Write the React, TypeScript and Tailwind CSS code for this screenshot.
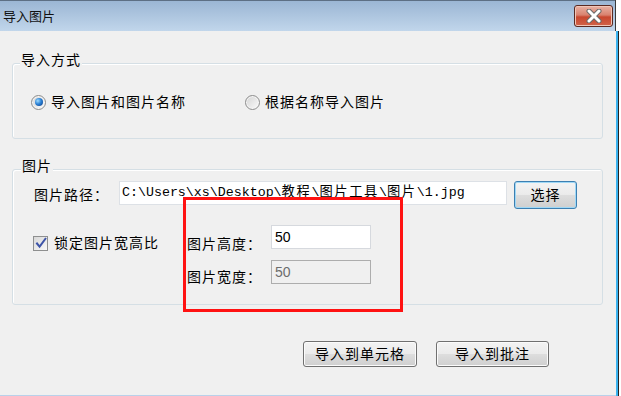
import React from 'react';

const Radio: React.FC<{ checked?: boolean }> = ({ checked }) => (
  <span className="flex h-[15px] w-[15px] shrink-0 items-center justify-center rounded-full border border-[#8d8d8d] bg-gradient-to-br from-[#d4d4d4] to-[#fbfbfb] shadow-[inset_0_0_0_1px_#f6f6f6]">
    {checked && (
      <span className="h-[8px] w-[8px] rounded-full bg-[radial-gradient(circle_at_35%_35%,#9fdcff_0%,#2c82d6_45%,#0a3780_100%)]" />
    )}
  </span>
);

const CheckBox: React.FC = () => (
  <span className="flex h-[15px] w-[15px] shrink-0 items-center justify-center border border-[#8e8f8f] bg-gradient-to-br from-[#d8d8d8] to-[#f9f9f9]">
    <svg width="12" height="12" viewBox="0 0 12 12">
      <path d="M2 6.5 L4.6 9.6 L10.4 1.8" stroke="#3d54a8" strokeWidth="2" fill="none" strokeLinecap="square" />
    </svg>
  </span>
);

const winBtn =
  'flex items-center justify-center rounded-[3px] border bg-[linear-gradient(#f3f3f3_0%,#ebebeb_48%,#dddddd_52%,#cfcfcf_100%)] text-[14px] tracking-[1px] leading-[18px]';

export default function App() {
  return (
    <div className="relative h-[396px] w-[621px] overflow-hidden bg-white font-['Liberation_Sans','Noto_Sans_CJK_SC',sans-serif] text-black">
      {/* title bar */}
      <div className="flex h-[31px]">
        <div className="flex w-[615px] border-t border-[#5d6f84] bg-gradient-to-b from-[#9bb6d4] to-[#c1d6eb]">
          <div className="pl-[3px] pt-[8px] text-[13px] leading-[16px] text-[#111]">导入图片</div>
          <div className="ml-auto mr-[2px] mt-[4px] flex h-[22px] w-[39px] items-center justify-center rounded-[3px] border border-[#5b2a22] bg-[linear-gradient(#e8b2a4_0%,#d9826f_45%,#c8472f_55%,#d1644a_100%)] shadow-[inset_0_0_0_1px_#f1c6b8]">
            <svg width="16" height="14" viewBox="0 0 16 14">
              <path d="M3 2 L13 12 M13 2 L3 12" stroke="#6a6a6a" strokeWidth="5" strokeLinecap="round" />
              <path d="M3 2 L13 12 M13 2 L3 12" stroke="#ffffff" strokeWidth="3" strokeLinecap="round" />
            </svg>
          </div>
        </div>
        <div className="w-px bg-[#3a3a3a]" />
        <div className="flex-1 bg-white" />
      </div>

      {/* body */}
      <div className="flex h-[364px]">
        <div className="w-[616px] bg-[#f0f0f0] pt-[32px] text-[14px] tracking-[1px]">
          {/* 导入方式 */}
          <div className="ml-[12px] h-[76px] w-[591px] rounded-[3px] border border-[#d5dfe5] shadow-[inset_1px_1px_0_#ffffff]">
            <div className="-mt-[13px] ml-[7px] w-fit bg-[#f0f0f0] px-px leading-[18px]">导入方式</div>
            <div className="ml-[18px] mt-[24px] flex h-[18px] items-center">
              <div className="flex w-[214px] items-center gap-[5px]">
                <Radio checked />
                <span className="leading-[18px]">导入图片和图片名称</span>
              </div>
              <div className="flex items-center gap-[5px]">
                <Radio />
                <span className="leading-[18px]">根据名称导入图片</span>
              </div>
            </div>
          </div>

          {/* 图片 */}
          <div className="ml-[12px] mt-[30px] h-[136px] w-[591px] rounded-[3px] border border-[#d5dfe5] shadow-[inset_1px_1px_0_#ffffff]">
            <div className="-mt-[13px] ml-[8px] w-fit bg-[#f0f0f0] px-px leading-[18px]">图片</div>

            <div className="mt-[6px] flex h-[24px] items-start">
              <div className="ml-[21px] w-[85px] pt-[5px] leading-[18px]">图片路径：</div>
              <div className="flex h-[24px] w-[388px] items-center border border-[#dde1e6] bg-white pl-[2px] font-['Liberation_Mono','Noto_Sans_CJK_SC',monospace] text-[13.3px] leading-[20px] tracking-normal">
                C:\Users\xs\Desktop\<span className="tracking-[1.6px]">教程</span>\<span className="tracking-[1.6px]">图片工具</span>\<span className="tracking-[1.6px]">图片</span>\1.jpg
              </div>
              <button className={`${winBtn} ml-[7px] h-[28px] w-[63px] border-[#3c7fb1] shadow-[inset_0_0_0_1px_#9fd8f6]`}>
                选择
              </button>
            </div>

            <div className="mt-[20px] flex items-start">
              <div className="ml-[20px] mt-[9px] flex h-[18px] w-[154px] items-center gap-[6px]">
                <CheckBox />
                <span className="leading-[18px]">锁定图片宽高比</span>
              </div>
              <div className="flex flex-col gap-[11px]">
                <div className="flex h-[24px] items-start">
                  <div className="mt-[10px] w-[84px] leading-[18px]">图片高度：</div>
                  <div className="flex h-[24px] w-[100px] items-center border border-[#d6d9de] bg-white pl-[3px] text-[14px] tracking-normal">
                    50
                  </div>
                </div>
                <div className="flex h-[24px] items-start">
                  <div className="mt-[8px] w-[84px] leading-[18px]">图片宽度：</div>
                  <div className="flex h-[24px] w-[100px] items-center border border-[#adadad] bg-[#f0f0f0] pl-[3px] text-[14px] tracking-normal text-[#6d6d6d]">
                    50
                  </div>
                </div>
              </div>
            </div>
          </div>

          {/* bottom buttons */}
          <div className="mt-[36px] flex justify-end gap-[19px] pr-[67px]">
            <button className={`${winBtn} h-[26px] w-[114px] border-[#707070] shadow-[inset_0_0_0_1px_#fbfbfb]`}>导入到单元格</button>
            <button className={`${winBtn} h-[26px] w-[113px] border-[#707070] shadow-[inset_0_0_0_1px_#fbfbfb]`}>导入到批注</button>
          </div>
        </div>
        <div className="w-[2px] bg-[#3ab2ee]" />
        <div className="w-px bg-[#222]" />
        <div className="flex-1 bg-white" />
      </div>

      {/* bottom frame line */}
      <div className="flex h-px">
        <div className="w-[616px] bg-[#b9d1ea]" />
        <div className="w-[2px] bg-[#3ab2ee]" />
        <div className="w-px bg-[#222]" />
      </div>

      {/* red annotation box */}
      <div className="pointer-events-none absolute left-[183px] top-[197px] h-[115px] w-[220px] border-[3px] border-[#ff1212]" />
    </div>
  );
}
